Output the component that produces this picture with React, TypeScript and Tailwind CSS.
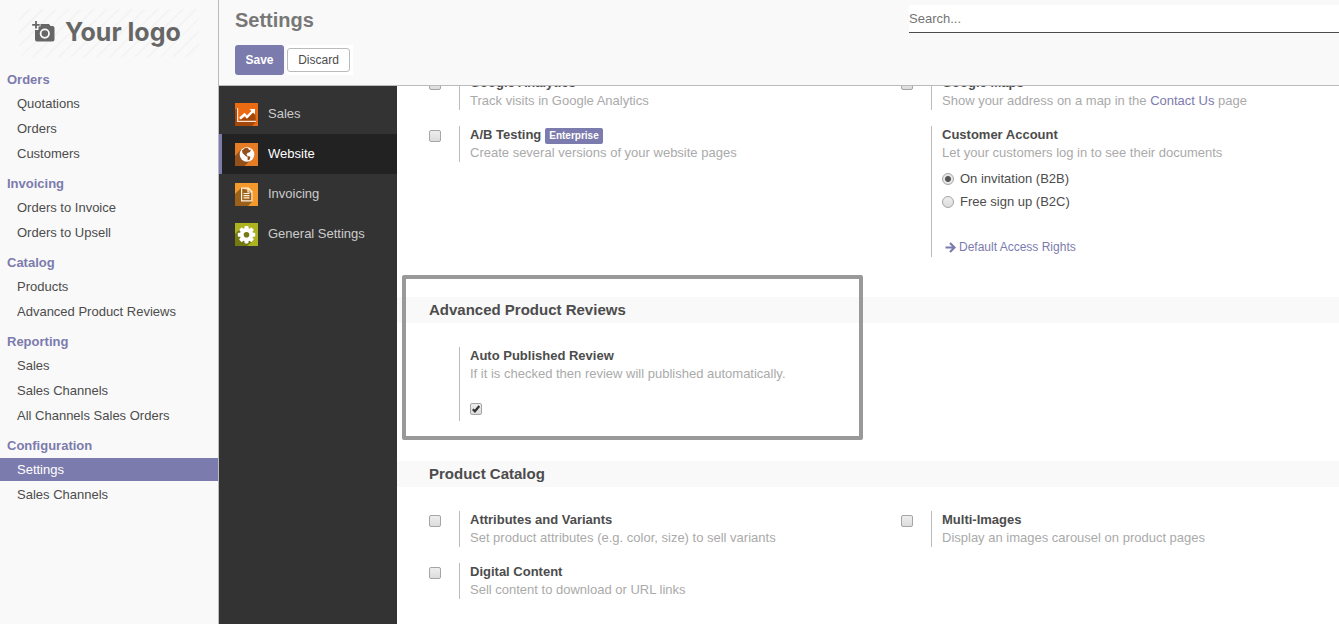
import { useState } from "react";
import type { ReactNode } from "react";

const menu = [
  { title: "Orders", items: ["Quotations", "Orders", "Customers"] },
  { title: "Invoicing", items: ["Orders to Invoice", "Orders to Upsell"] },
  { title: "Catalog", items: ["Products", "Advanced Product Reviews"] },
  { title: "Reporting", items: ["Sales", "Sales Channels", "All Channels Sales Orders"] },
  { title: "Configuration", items: ["Settings", "Sales Channels"] },
];

function Logo() {
  return (
    <a
      href="#home"
      className="mx-auto mt-[9px] flex h-12 w-[180px] items-center gap-[10px] bg-[repeating-linear-gradient(135deg,#f9f9f9_0_7px,#f4f4f4_7px_9px)] pb-[2px] pl-[13px] text-[#666]"
    >
      <svg width="23" height="22" viewBox="0 0 23 22" aria-hidden="true">
        <path
          fill="currentColor"
          d="M8.500 3H17l1.500 2H20.500a2 2 0 0 1 2 2V18.500a2 2 0 0 1-2 2H5a2 2 0 0 1-2-2V9h3.500V5.500h2z"
        />
        <path fill="none" stroke="currentColor" strokeWidth="1.800" d="M4 0v7.500M0.200 3.800h7.500" />
        <circle cx="12.800" cy="12.600" r="4.200" fill="none" stroke="#f9f9f9" strokeWidth="1.800" />
      </svg>
      <span className="font-['Inter',sans-serif] text-[25px] leading-8 font-bold">Your logo</span>
    </a>
  );
}

function Sidebar() {
  return (
    <aside className="w-[219px] shrink-0 border-r border-[#bbb] bg-[#f9f9f9]">
      <Logo />
      <nav className="mt-[14px] flex flex-col gap-[10px]">
        {menu.map((group) => (
          <section key={group.title}>
            <h2 className="px-[7px] font-bold text-[#7c7bad]">{group.title}</h2>
            <ul className="mt-[3px] flex flex-col gap-[2px]">
              {group.items.map((item) => (
                <li key={item}>
                  <a
                    href="#menu"
                    className={
                      item === "Settings"
                        ? "block bg-[#7c7bad] pt-[3px] pb-[2px] pl-[17px] text-white"
                        : "block pt-[3px] pb-[2px] pl-[17px]"
                    }
                  >
                    {item}
                  </a>
                </li>
              ))}
            </ul>
          </section>
        ))}
      </nav>
    </aside>
  );
}

function ControlPanel() {
  return (
    <header className="z-10 grid h-[86px] shrink-0 grid-cols-[690fr_430fr] border-b border-[#bbb] bg-[#f9f9f9]">
      <div className="pl-4">
        <h1 className="pt-2 text-[20px] leading-6 font-bold text-[#777]">Settings</h1>
        <div className="mt-[13px] flex items-center text-[12px]">
          <button className="h-[30px] w-[49px] rounded-[3px] bg-[#7c7bad] font-bold text-white">Save</button>
          <div className="ml-[2px] flex h-[30px] items-center bg-white pr-[3px] pl-px">
            <button className="h-6 w-[63px] rounded-[3px] border border-[#bbb] bg-white">Discard</button>
          </div>
        </div>
      </div>
      <div className="pt-[5px]">
        <input
          type="text"
          aria-label="Search"
          placeholder="Search..."
          className="block h-7 w-full border-b border-[#4c4c4c] bg-white outline-none placeholder:text-[#757575]"
        />
      </div>
    </header>
  );
}

const tabs: { label: string; icon: ReactNode }[] = [
  {
    label: "Sales",
    icon: (
      <>
        <path fill="#eb6b12" d="M0 0h23v23H0z" />
        <path fill="#a3480a" d="M2 5L0 7v16h17l4-4-1-11-9 6-9 4z" />
        <path fill="#eb6b12" d="M3 5h16L9 10l-6 5z" />
        <path fill="none" stroke="#fde3d0" strokeWidth="1.200" d="M2.600 5v13.400H21" />
        <path fill="none" stroke="#fff" strokeWidth="2.400" d="M5 15.500l4.500-4 2.500 2.500 6-6" />
        <path fill="#fff" d="M14.500 6H20v5.500z" />
      </>
    ),
  },
  {
    label: "Website",
    icon: (
      <>
        <path fill="#e67d24" d="M0 0h23v23H0z" />
        <path fill="#94501b" d="M6 6.500L0 13v10h9.500l7-6.500z" />
        <circle cx="12" cy="11.500" r="7.300" fill="#fff" />
        <path
          fill="#94501b"
          d="M7 7.500l3-2.500 3 0 1 2 2-.5-1 2.500-2.500 1-1 1.500 1 1.500-.5 1-2.500-2-2-2zM12.500 13l3 .8-.8 2.700-2 1z"
        />
      </>
    ),
  },
  {
    label: "Invoicing",
    icon: (
      <>
        <path fill="#f4992b" d="M0 0h23v23H0z" />
        <path fill="#9a611b" d="M6 5L0 11v12h13l4-4V9z" />
        <path
          fill="none"
          stroke="#fff1dc"
          strokeWidth="1.200"
          d="M6.600 5.100h6.900l3.400 3.400v9.400H6.600zM13 5.500V9h3.500M8.500 10.500h6M8.500 12.700h6M8.500 14.900h6"
        />
      </>
    ),
  },
  {
    label: "General Settings",
    icon: (
      <>
        <path fill="#adb31f" d="M0 0h23v23H0z" />
        <path fill="#737a12" d="M5 6L0 11v12h12l7-6z" />
        <g fill="#fff">
          <circle cx="11.500" cy="11.700" r="6.700" />
          <rect x="9.500" y="3" width="4" height="17.400" rx="0.800" />
          <rect x="9.500" y="3" width="4" height="17.400" rx="0.800" transform="rotate(45 11.500 11.700)" />
          <rect x="9.500" y="3" width="4" height="17.400" rx="0.800" transform="rotate(90 11.500 11.700)" />
          <rect x="9.500" y="3" width="4" height="17.400" rx="0.800" transform="rotate(135 11.500 11.700)" />
        </g>
        <circle cx="11.500" cy="11.700" r="2.800" fill="#737a12" />
      </>
    ),
  },
];

function SettingsTabs() {
  return (
    <nav className="w-[178px] shrink-0 bg-[#333] pt-2">
      {tabs.map((tab) => (
        <a
          key={tab.label}
          href="#tab"
          className={
            tab.label === "Website"
              ? "flex h-10 items-center border-l-[3px] border-[#7c7bad] bg-[#222] pl-[13px] text-white"
              : "flex h-10 items-center pl-4 text-[#ccc]"
          }
        >
          <svg width="23" height="23" viewBox="0 0 23 23" aria-hidden="true">
            {tab.icon}
          </svg>
          <span className="ml-[10px]">{tab.label}</span>
        </a>
      ))}
    </nav>
  );
}

function Checkbox({ id, label, initial = false }: { id: string; label?: string; initial?: boolean }) {
  const [checked, setChecked] = useState(initial);
  return (
    <span className="relative block size-3">
      <input
        id={id}
        type="checkbox"
        aria-label={label}
        checked={checked}
        onChange={() => setChecked(!checked)}
        className="block size-3 appearance-none rounded-[2px] border border-[#a5a5a5] bg-linear-to-b from-[#eee] to-[#dcdcdc]"
      />
      {checked && (
        <svg className="pointer-events-none absolute inset-0" width="12" height="12" viewBox="0 0 12 12" aria-hidden="true">
          <path d="M2.800 6.200l2.100 2.100L9.300 3" fill="none" stroke="#333" strokeWidth="2.200" />
        </svg>
      )}
    </span>
  );
}

type SettingProps = {
  id: string;
  title: string;
  description: ReactNode;
  badge?: string;
  checkbox?: boolean;
  children?: ReactNode;
};

function Setting({ id, title, description, badge, checkbox = true, children }: SettingProps) {
  return (
    <div className="flex">
      <div className="w-[30px] shrink-0 pt-1">{checkbox && <Checkbox id={id} />}</div>
      <div className="flex-1 border-l border-[#bbb] pl-[10px]">
        <div className="flex items-center">
          {checkbox ? (
            <label htmlFor={id} className="font-bold">
              {title}
            </label>
          ) : (
            <h3 className="font-bold">{title}</h3>
          )}
          {badge && (
            <span className="mt-px -mb-px ml-1 rounded-[2px] bg-[#7c7bad] px-1 text-[10px] leading-4 font-bold text-white">
              {badge}
            </span>
          )}
        </div>
        <p className="text-[#aaa]">{description}</p>
        {children}
      </div>
    </div>
  );
}

function SectionTitle({ children }: { children: ReactNode }) {
  return <h2 className="mb-6 bg-[#f9f9f9] pl-8 text-[15px] leading-[26px] font-bold">{children}</h2>;
}

function Rows({ children }: { children: ReactNode }) {
  return <div className="grid grid-cols-2 gap-x-[34px] gap-y-4 pl-8">{children}</div>;
}

function AccessChoice() {
  const [choice, setChoice] = useState("b2b");
  const options = [
    { value: "b2b", label: "On invitation (B2B)" },
    { value: "b2c", label: "Free sign up (B2C)" },
  ];
  return (
    <div className="mt-2 flex flex-col gap-[5px]">
      {options.map((option) => (
        <label key={option.value} className="flex items-center gap-[6px]">
          <input
            type="radio"
            name="access"
            checked={choice === option.value}
            onChange={() => setChoice(option.value)}
            className="size-3 appearance-none rounded-full border border-[#a5a5a5] bg-linear-to-b from-[#eee] to-[#dcdcdc] checked:bg-[radial-gradient(circle,#555_0_2.500px,#e6e6e6_3.500px)]"
          />
          {option.label}
        </label>
      ))}
    </div>
  );
}

export default function App() {
  return (
    <div className="flex h-screen overflow-hidden bg-white font-['Liberation_Sans',Arial,sans-serif] text-[13px] leading-[18px] text-[#4c4c4c]">
      <Sidebar />
      <div className="flex min-w-0 flex-1 flex-col">
        <ControlPanel />
        <div className="flex min-h-0 flex-1">
          <SettingsTabs />
          <main className="min-w-0 flex-1 overflow-hidden">
            <div className="-mt-3 flex flex-col gap-10">
              <Rows>
                <Setting id="analytics" title="Google Analytics" description="Track visits in Google Analytics" />
                <Setting
                  id="maps"
                  title="Google Maps"
                  description={
                    <>
                      Show your address on a map in the{" "}
                      <a href="#contact" className="text-[#7c7bad]">
                        Contact Us
                      </a>{" "}
                      page
                    </>
                  }
                />
                <div>
                  <Setting
                    id="ab"
                    title="A/B Testing"
                    badge="Enterprise"
                    description="Create several versions of your website pages"
                  />
                </div>
                <Setting
                  id="account"
                  title="Customer Account"
                  checkbox={false}
                  description="Let your customers log in to see their documents"
                >
                  <AccessChoice />
                  <a
                    href="#rights"
                    className="mt-[27px] mb-px ml-[3px] flex items-center gap-[3px] text-[12px] text-[#7c7bad]"
                  >
                    <svg width="11" height="11" viewBox="0 0 11 11" aria-hidden="true">
                      <path d="M0.500 5.500H9M5 1l4.500 4.500L5 10" fill="none" stroke="currentColor" strokeWidth="2.200" />
                    </svg>
                    Default Access Rights
                  </a>
                </Setting>
              </Rows>

              <section className="relative">
                <SectionTitle>Advanced Product Reviews</SectionTitle>
                <Rows>
                  <Setting
                    id="auto-published-row"
                    title="Auto Published Review"
                    checkbox={false}
                    description="If it is checked then review will published automatically."
                  >
                    <div className="mt-5 mb-[6px]">
                      <Checkbox id="auto-published" label="Auto Published Review" initial />
                    </div>
                  </Setting>
                </Rows>
                <div className="pointer-events-none absolute -top-[22px] -bottom-[19px] left-[5px] w-[461px] rounded-[2px] border-4 border-[#999]" />
              </section>

              <section>
                <SectionTitle>Product Catalog</SectionTitle>
                <Rows>
                  <Setting
                    id="variants"
                    title="Attributes and Variants"
                    description="Set product attributes (e.g. color, size) to sell variants"
                  />
                  <Setting id="images" title="Multi-Images" description="Display an images carousel on product pages" />
                  <Setting id="digital" title="Digital Content" description="Sell content to download or URL links" />
                </Rows>
              </section>
            </div>
          </main>
        </div>
      </div>
    </div>
  );
}
